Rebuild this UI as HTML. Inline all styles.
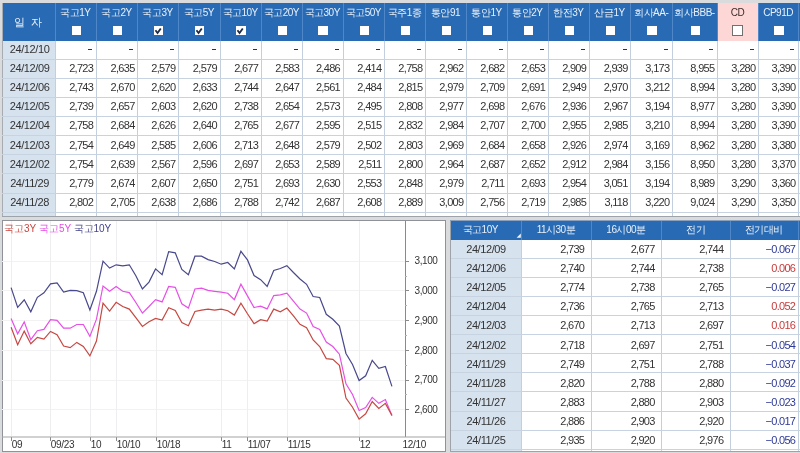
<!DOCTYPE html>
<html><head><meta charset="utf-8"><style>
html,body{margin:0;padding:0;}
body{width:800px;height:453px;overflow:hidden;position:relative;background:#dadbdd;font-family:"Liberation Sans",sans-serif;color:#222;}
div{position:absolute;box-sizing:border-box;}
.t{white-space:nowrap;line-height:12px;}
.hd{color:#e9f0fa;font-size:10px;text-align:center;letter-spacing:-0.5px;}
.dt{font-size:11px;text-align:center;letter-spacing:-0.4px;color:#333;}
.nm{font-size:11px;text-align:right;letter-spacing:-0.7px;color:#333;}
.dash{width:4px;height:1px;background:#333;}
.cb{width:9.4px;height:9.4px;background:#fff;}
.vl{width:1px;}
.hl{height:1px;}
</style></head><body>
<div style="left:0;top:0;width:800px;height:453px;will-change:transform">
<div style="left:2px;top:2.6px;width:798px;height:213.70000000000002px;background:#fff"></div><div class="vl" style="left:2px;top:2.6px;height:213.9px;background:#a7abb2"></div><div style="left:3px;top:2.6px;width:797px;height:38.0px;background:#286bb4"></div><div style="left:717.5px;top:2.6px;width:40.5px;height:38.0px;background:#fdd7d6"></div><div style="left:3px;top:40.6px;width:52.1px;height:175.70000000000002px;background:#d7e2ef"></div><div class="vl" style="left:55.1px;top:2.6px;height:38.0px;background:#4f87c8"></div><div class="vl" style="left:95.8px;top:2.6px;height:38.0px;background:#4f87c8"></div><div class="vl" style="left:137.2px;top:2.6px;height:38.0px;background:#4f87c8"></div><div class="vl" style="left:178.0px;top:2.6px;height:38.0px;background:#4f87c8"></div><div class="vl" style="left:219.5px;top:2.6px;height:38.0px;background:#4f87c8"></div><div class="vl" style="left:260.8px;top:2.6px;height:38.0px;background:#4f87c8"></div><div class="vl" style="left:301.8px;top:2.6px;height:38.0px;background:#4f87c8"></div><div class="vl" style="left:342.6px;top:2.6px;height:38.0px;background:#4f87c8"></div><div class="vl" style="left:384.0px;top:2.6px;height:38.0px;background:#4f87c8"></div><div class="vl" style="left:425.0px;top:2.6px;height:38.0px;background:#4f87c8"></div><div class="vl" style="left:466.0px;top:2.6px;height:38.0px;background:#4f87c8"></div><div class="vl" style="left:507.0px;top:2.6px;height:38.0px;background:#4f87c8"></div><div class="vl" style="left:547.8px;top:2.6px;height:38.0px;background:#4f87c8"></div><div class="vl" style="left:588.8px;top:2.6px;height:38.0px;background:#4f87c8"></div><div class="vl" style="left:630.3px;top:2.6px;height:38.0px;background:#4f87c8"></div><div class="vl" style="left:672.0px;top:2.6px;height:38.0px;background:#4f87c8"></div><div class="vl" style="left:717.0px;top:2.6px;height:38.0px;background:#4f87c8"></div><div class="vl" style="left:758.0px;top:2.6px;height:38.0px;background:#4f87c8"></div><div class="vl" style="left:798.1px;top:2.6px;height:38.0px;background:#4f87c8"></div><div class="vl" style="left:55.1px;top:40.6px;height:175.70000000000002px;background:#c3cfdc"></div><div class="vl" style="left:95.8px;top:40.6px;height:175.70000000000002px;background:#c3cfdc"></div><div class="vl" style="left:137.2px;top:40.6px;height:175.70000000000002px;background:#c3cfdc"></div><div class="vl" style="left:178.0px;top:40.6px;height:175.70000000000002px;background:#c3cfdc"></div><div class="vl" style="left:219.5px;top:40.6px;height:175.70000000000002px;background:#c3cfdc"></div><div class="vl" style="left:260.8px;top:40.6px;height:175.70000000000002px;background:#c3cfdc"></div><div class="vl" style="left:301.8px;top:40.6px;height:175.70000000000002px;background:#c3cfdc"></div><div class="vl" style="left:342.6px;top:40.6px;height:175.70000000000002px;background:#c3cfdc"></div><div class="vl" style="left:384.0px;top:40.6px;height:175.70000000000002px;background:#c3cfdc"></div><div class="vl" style="left:425.0px;top:40.6px;height:175.70000000000002px;background:#c3cfdc"></div><div class="vl" style="left:466.0px;top:40.6px;height:175.70000000000002px;background:#c3cfdc"></div><div class="vl" style="left:507.0px;top:40.6px;height:175.70000000000002px;background:#c3cfdc"></div><div class="vl" style="left:547.8px;top:40.6px;height:175.70000000000002px;background:#c3cfdc"></div><div class="vl" style="left:588.8px;top:40.6px;height:175.70000000000002px;background:#c3cfdc"></div><div class="vl" style="left:630.3px;top:40.6px;height:175.70000000000002px;background:#c3cfdc"></div><div class="vl" style="left:672.0px;top:40.6px;height:175.70000000000002px;background:#c3cfdc"></div><div class="vl" style="left:717.0px;top:40.6px;height:175.70000000000002px;background:#c3cfdc"></div><div class="vl" style="left:758.0px;top:40.6px;height:175.70000000000002px;background:#c3cfdc"></div><div class="vl" style="left:798.1px;top:40.6px;height:175.70000000000002px;background:#c3cfdc"></div><div class="hl" style="left:2px;top:59.00px;width:798px;background:#c7d3e0"></div><div class="hl" style="left:2px;top:78.00px;width:798px;background:#c7d3e0"></div><div class="hl" style="left:2px;top:97.00px;width:798px;background:#c7d3e0"></div><div class="hl" style="left:2px;top:116.00px;width:798px;background:#c7d3e0"></div><div class="hl" style="left:2px;top:135.00px;width:798px;background:#c7d3e0"></div><div class="hl" style="left:2px;top:154.00px;width:798px;background:#c7d3e0"></div><div class="hl" style="left:2px;top:173.00px;width:798px;background:#c7d3e0"></div><div class="hl" style="left:2px;top:193.00px;width:798px;background:#c7d3e0"></div><div class="hl" style="left:2px;top:212.00px;width:798px;background:#c7d3e0"></div><div class="hl" style="left:2px;top:215.8px;width:798px;background:#9ea3aa"></div><div class="t hd" style="left:1.6px;top:15.5px;width:53.5px;font-size:11px;letter-spacing:0px">일&nbsp;&nbsp;자</div><div class="t hd" style="left:55.1px;top:6.5px;width:40.699999999999996px;color:#e9f0fa">국고1Y</div><div class="cb" style="left:71.65px;top:26px"></div><div class="t hd" style="left:95.8px;top:6.5px;width:41.39999999999999px;color:#e9f0fa">국고2Y</div><div class="cb" style="left:112.70px;top:26px"></div><div class="t hd" style="left:137.2px;top:6.5px;width:40.80000000000001px;color:#e9f0fa">국고3Y</div><div class="cb" style="left:153.80px;top:26px"></div><svg style="position:absolute;left:153.80px;top:26px" width="9.4" height="9.4" viewBox="0 0 9 9"><path d="M1.4 4.1 L3.4 6.7 L6.5 2.4" fill="none" stroke="#1e2c48" stroke-width="1.8"/></svg><div class="t hd" style="left:178.0px;top:6.5px;width:41.5px;color:#e9f0fa">국고5Y</div><div class="cb" style="left:194.95px;top:26px"></div><svg style="position:absolute;left:194.95px;top:26px" width="9.4" height="9.4" viewBox="0 0 9 9"><path d="M1.4 4.1 L3.4 6.7 L6.5 2.4" fill="none" stroke="#1e2c48" stroke-width="1.8"/></svg><div class="t hd" style="left:219.5px;top:6.5px;width:41.30000000000001px;color:#e9f0fa">국고10Y</div><div class="cb" style="left:236.35px;top:26px"></div><svg style="position:absolute;left:236.35px;top:26px" width="9.4" height="9.4" viewBox="0 0 9 9"><path d="M1.4 4.1 L3.4 6.7 L6.5 2.4" fill="none" stroke="#1e2c48" stroke-width="1.8"/></svg><div class="t hd" style="left:260.8px;top:6.5px;width:41.0px;color:#e9f0fa">국고20Y</div><div class="cb" style="left:277.50px;top:26px"></div><div class="t hd" style="left:301.8px;top:6.5px;width:40.80000000000001px;color:#e9f0fa">국고30Y</div><div class="cb" style="left:318.40px;top:26px"></div><div class="t hd" style="left:342.6px;top:6.5px;width:41.39999999999998px;color:#e9f0fa">국고50Y</div><div class="cb" style="left:359.50px;top:26px"></div><div class="t hd" style="left:384.0px;top:6.5px;width:41.0px;color:#e9f0fa">국주1종</div><div class="cb" style="left:400.70px;top:26px"></div><div class="t hd" style="left:425.0px;top:6.5px;width:41.0px;color:#e9f0fa">통안91</div><div class="cb" style="left:441.70px;top:26px"></div><div class="t hd" style="left:466.0px;top:6.5px;width:41.0px;color:#e9f0fa">통안1Y</div><div class="cb" style="left:482.70px;top:26px"></div><div class="t hd" style="left:507.0px;top:6.5px;width:40.799999999999955px;color:#e9f0fa">통안2Y</div><div class="cb" style="left:523.60px;top:26px"></div><div class="t hd" style="left:547.8px;top:6.5px;width:41.0px;color:#e9f0fa">한전3Y</div><div class="cb" style="left:564.50px;top:26px"></div><div class="t hd" style="left:588.8px;top:6.5px;width:41.5px;color:#e9f0fa">산금1Y</div><div class="cb" style="left:605.75px;top:26px"></div><div class="t hd" style="left:630.3px;top:6.5px;width:41.700000000000045px;color:#e9f0fa">회사AA-</div><div class="cb" style="left:647.35px;top:26px"></div><div class="t hd" style="left:672.0px;top:6.5px;width:45.0px;color:#e9f0fa">회사BBB-</div><div class="cb" style="left:690.70px;top:26px"></div><div class="t hd" style="left:717.0px;top:6.5px;width:41.0px;color:#3a2a2a">CD</div><div class="cb" style="left:732.00px;top:25px;width:11px;height:11px;border:1.5px solid #707070"></div><div class="t hd" style="left:758.0px;top:6.5px;width:40.10000000000002px;color:#e9f0fa">CP91D</div><div class="cb" style="left:774.25px;top:26px"></div><div class="t dt" style="left:3px;top:42.80px;width:53.1px">24/12/10</div><div class="dash" style="left:88.00px;top:49px"></div><div class="dash" style="left:129.40px;top:49px"></div><div class="dash" style="left:170.20px;top:49px"></div><div class="dash" style="left:211.70px;top:49px"></div><div class="dash" style="left:253.00px;top:49px"></div><div class="dash" style="left:294.00px;top:49px"></div><div class="dash" style="left:334.80px;top:49px"></div><div class="dash" style="left:376.20px;top:49px"></div><div class="dash" style="left:417.20px;top:49px"></div><div class="dash" style="left:458.20px;top:49px"></div><div class="dash" style="left:499.20px;top:49px"></div><div class="dash" style="left:540.00px;top:49px"></div><div class="dash" style="left:581.00px;top:49px"></div><div class="dash" style="left:622.50px;top:49px"></div><div class="dash" style="left:664.20px;top:49px"></div><div class="dash" style="left:709.20px;top:49px"></div><div class="dash" style="left:750.20px;top:49px"></div><div class="dash" style="left:790.30px;top:49px"></div><div class="t dt" style="left:3px;top:61.94px;width:53.1px">24/12/09</div><div class="t nm" style="left:55.1px;top:61.94px;width:38.10px">2,723</div><div class="t nm" style="left:95.8px;top:61.94px;width:38.80px">2,635</div><div class="t nm" style="left:137.2px;top:61.94px;width:38.20px">2,579</div><div class="t nm" style="left:178.0px;top:61.94px;width:38.90px">2,579</div><div class="t nm" style="left:219.5px;top:61.94px;width:38.70px">2,677</div><div class="t nm" style="left:260.8px;top:61.94px;width:38.40px">2,583</div><div class="t nm" style="left:301.8px;top:61.94px;width:38.20px">2,486</div><div class="t nm" style="left:342.6px;top:61.94px;width:38.80px">2,414</div><div class="t nm" style="left:384.0px;top:61.94px;width:38.40px">2,758</div><div class="t nm" style="left:425.0px;top:61.94px;width:38.40px">2,962</div><div class="t nm" style="left:466.0px;top:61.94px;width:38.40px">2,682</div><div class="t nm" style="left:507.0px;top:61.94px;width:38.20px">2,653</div><div class="t nm" style="left:547.8px;top:61.94px;width:38.40px">2,909</div><div class="t nm" style="left:588.8px;top:61.94px;width:38.90px">2,939</div><div class="t nm" style="left:630.3px;top:61.94px;width:39.10px">3,173</div><div class="t nm" style="left:672.0px;top:61.94px;width:42.40px">8,955</div><div class="t nm" style="left:717.0px;top:61.94px;width:38.40px">3,280</div><div class="t nm" style="left:758.0px;top:61.94px;width:37.50px">3,390</div><div class="t dt" style="left:3px;top:81.08px;width:53.1px">24/12/06</div><div class="t nm" style="left:55.1px;top:81.08px;width:38.10px">2,743</div><div class="t nm" style="left:95.8px;top:81.08px;width:38.80px">2,670</div><div class="t nm" style="left:137.2px;top:81.08px;width:38.20px">2,620</div><div class="t nm" style="left:178.0px;top:81.08px;width:38.90px">2,633</div><div class="t nm" style="left:219.5px;top:81.08px;width:38.70px">2,744</div><div class="t nm" style="left:260.8px;top:81.08px;width:38.40px">2,647</div><div class="t nm" style="left:301.8px;top:81.08px;width:38.20px">2,561</div><div class="t nm" style="left:342.6px;top:81.08px;width:38.80px">2,484</div><div class="t nm" style="left:384.0px;top:81.08px;width:38.40px">2,815</div><div class="t nm" style="left:425.0px;top:81.08px;width:38.40px">2,979</div><div class="t nm" style="left:466.0px;top:81.08px;width:38.40px">2,709</div><div class="t nm" style="left:507.0px;top:81.08px;width:38.20px">2,691</div><div class="t nm" style="left:547.8px;top:81.08px;width:38.40px">2,949</div><div class="t nm" style="left:588.8px;top:81.08px;width:38.90px">2,970</div><div class="t nm" style="left:630.3px;top:81.08px;width:39.10px">3,212</div><div class="t nm" style="left:672.0px;top:81.08px;width:42.40px">8,994</div><div class="t nm" style="left:717.0px;top:81.08px;width:38.40px">3,280</div><div class="t nm" style="left:758.0px;top:81.08px;width:37.50px">3,390</div><div class="t dt" style="left:3px;top:100.22px;width:53.1px">24/12/05</div><div class="t nm" style="left:55.1px;top:100.22px;width:38.10px">2,739</div><div class="t nm" style="left:95.8px;top:100.22px;width:38.80px">2,657</div><div class="t nm" style="left:137.2px;top:100.22px;width:38.20px">2,603</div><div class="t nm" style="left:178.0px;top:100.22px;width:38.90px">2,620</div><div class="t nm" style="left:219.5px;top:100.22px;width:38.70px">2,738</div><div class="t nm" style="left:260.8px;top:100.22px;width:38.40px">2,654</div><div class="t nm" style="left:301.8px;top:100.22px;width:38.20px">2,573</div><div class="t nm" style="left:342.6px;top:100.22px;width:38.80px">2,495</div><div class="t nm" style="left:384.0px;top:100.22px;width:38.40px">2,808</div><div class="t nm" style="left:425.0px;top:100.22px;width:38.40px">2,977</div><div class="t nm" style="left:466.0px;top:100.22px;width:38.40px">2,698</div><div class="t nm" style="left:507.0px;top:100.22px;width:38.20px">2,676</div><div class="t nm" style="left:547.8px;top:100.22px;width:38.40px">2,936</div><div class="t nm" style="left:588.8px;top:100.22px;width:38.90px">2,967</div><div class="t nm" style="left:630.3px;top:100.22px;width:39.10px">3,194</div><div class="t nm" style="left:672.0px;top:100.22px;width:42.40px">8,977</div><div class="t nm" style="left:717.0px;top:100.22px;width:38.40px">3,280</div><div class="t nm" style="left:758.0px;top:100.22px;width:37.50px">3,390</div><div class="t dt" style="left:3px;top:119.36px;width:53.1px">24/12/04</div><div class="t nm" style="left:55.1px;top:119.36px;width:38.10px">2,758</div><div class="t nm" style="left:95.8px;top:119.36px;width:38.80px">2,684</div><div class="t nm" style="left:137.2px;top:119.36px;width:38.20px">2,626</div><div class="t nm" style="left:178.0px;top:119.36px;width:38.90px">2,640</div><div class="t nm" style="left:219.5px;top:119.36px;width:38.70px">2,765</div><div class="t nm" style="left:260.8px;top:119.36px;width:38.40px">2,677</div><div class="t nm" style="left:301.8px;top:119.36px;width:38.20px">2,595</div><div class="t nm" style="left:342.6px;top:119.36px;width:38.80px">2,515</div><div class="t nm" style="left:384.0px;top:119.36px;width:38.40px">2,832</div><div class="t nm" style="left:425.0px;top:119.36px;width:38.40px">2,984</div><div class="t nm" style="left:466.0px;top:119.36px;width:38.40px">2,707</div><div class="t nm" style="left:507.0px;top:119.36px;width:38.20px">2,700</div><div class="t nm" style="left:547.8px;top:119.36px;width:38.40px">2,955</div><div class="t nm" style="left:588.8px;top:119.36px;width:38.90px">2,985</div><div class="t nm" style="left:630.3px;top:119.36px;width:39.10px">3,210</div><div class="t nm" style="left:672.0px;top:119.36px;width:42.40px">8,994</div><div class="t nm" style="left:717.0px;top:119.36px;width:38.40px">3,280</div><div class="t nm" style="left:758.0px;top:119.36px;width:37.50px">3,390</div><div class="t dt" style="left:3px;top:138.50px;width:53.1px">24/12/03</div><div class="t nm" style="left:55.1px;top:138.50px;width:38.10px">2,754</div><div class="t nm" style="left:95.8px;top:138.50px;width:38.80px">2,649</div><div class="t nm" style="left:137.2px;top:138.50px;width:38.20px">2,585</div><div class="t nm" style="left:178.0px;top:138.50px;width:38.90px">2,606</div><div class="t nm" style="left:219.5px;top:138.50px;width:38.70px">2,713</div><div class="t nm" style="left:260.8px;top:138.50px;width:38.40px">2,648</div><div class="t nm" style="left:301.8px;top:138.50px;width:38.20px">2,579</div><div class="t nm" style="left:342.6px;top:138.50px;width:38.80px">2,502</div><div class="t nm" style="left:384.0px;top:138.50px;width:38.40px">2,803</div><div class="t nm" style="left:425.0px;top:138.50px;width:38.40px">2,969</div><div class="t nm" style="left:466.0px;top:138.50px;width:38.40px">2,684</div><div class="t nm" style="left:507.0px;top:138.50px;width:38.20px">2,658</div><div class="t nm" style="left:547.8px;top:138.50px;width:38.40px">2,926</div><div class="t nm" style="left:588.8px;top:138.50px;width:38.90px">2,974</div><div class="t nm" style="left:630.3px;top:138.50px;width:39.10px">3,169</div><div class="t nm" style="left:672.0px;top:138.50px;width:42.40px">8,962</div><div class="t nm" style="left:717.0px;top:138.50px;width:38.40px">3,280</div><div class="t nm" style="left:758.0px;top:138.50px;width:37.50px">3,380</div><div class="t dt" style="left:3px;top:157.64px;width:53.1px">24/12/02</div><div class="t nm" style="left:55.1px;top:157.64px;width:38.10px">2,754</div><div class="t nm" style="left:95.8px;top:157.64px;width:38.80px">2,639</div><div class="t nm" style="left:137.2px;top:157.64px;width:38.20px">2,567</div><div class="t nm" style="left:178.0px;top:157.64px;width:38.90px">2,596</div><div class="t nm" style="left:219.5px;top:157.64px;width:38.70px">2,697</div><div class="t nm" style="left:260.8px;top:157.64px;width:38.40px">2,653</div><div class="t nm" style="left:301.8px;top:157.64px;width:38.20px">2,589</div><div class="t nm" style="left:342.6px;top:157.64px;width:38.80px">2,511</div><div class="t nm" style="left:384.0px;top:157.64px;width:38.40px">2,800</div><div class="t nm" style="left:425.0px;top:157.64px;width:38.40px">2,964</div><div class="t nm" style="left:466.0px;top:157.64px;width:38.40px">2,687</div><div class="t nm" style="left:507.0px;top:157.64px;width:38.20px">2,652</div><div class="t nm" style="left:547.8px;top:157.64px;width:38.40px">2,912</div><div class="t nm" style="left:588.8px;top:157.64px;width:38.90px">2,984</div><div class="t nm" style="left:630.3px;top:157.64px;width:39.10px">3,156</div><div class="t nm" style="left:672.0px;top:157.64px;width:42.40px">8,950</div><div class="t nm" style="left:717.0px;top:157.64px;width:38.40px">3,280</div><div class="t nm" style="left:758.0px;top:157.64px;width:37.50px">3,370</div><div class="t dt" style="left:3px;top:176.78px;width:53.1px">24/11/29</div><div class="t nm" style="left:55.1px;top:176.78px;width:38.10px">2,779</div><div class="t nm" style="left:95.8px;top:176.78px;width:38.80px">2,674</div><div class="t nm" style="left:137.2px;top:176.78px;width:38.20px">2,607</div><div class="t nm" style="left:178.0px;top:176.78px;width:38.90px">2,650</div><div class="t nm" style="left:219.5px;top:176.78px;width:38.70px">2,751</div><div class="t nm" style="left:260.8px;top:176.78px;width:38.40px">2,693</div><div class="t nm" style="left:301.8px;top:176.78px;width:38.20px">2,630</div><div class="t nm" style="left:342.6px;top:176.78px;width:38.80px">2,553</div><div class="t nm" style="left:384.0px;top:176.78px;width:38.40px">2,848</div><div class="t nm" style="left:425.0px;top:176.78px;width:38.40px">2,979</div><div class="t nm" style="left:466.0px;top:176.78px;width:38.40px">2,711</div><div class="t nm" style="left:507.0px;top:176.78px;width:38.20px">2,693</div><div class="t nm" style="left:547.8px;top:176.78px;width:38.40px">2,954</div><div class="t nm" style="left:588.8px;top:176.78px;width:38.90px">3,051</div><div class="t nm" style="left:630.3px;top:176.78px;width:39.10px">3,194</div><div class="t nm" style="left:672.0px;top:176.78px;width:42.40px">8,989</div><div class="t nm" style="left:717.0px;top:176.78px;width:38.40px">3,290</div><div class="t nm" style="left:758.0px;top:176.78px;width:37.50px">3,360</div><div class="t dt" style="left:3px;top:195.92px;width:53.1px">24/11/28</div><div class="t nm" style="left:55.1px;top:195.92px;width:38.10px">2,802</div><div class="t nm" style="left:95.8px;top:195.92px;width:38.80px">2,705</div><div class="t nm" style="left:137.2px;top:195.92px;width:38.20px">2,638</div><div class="t nm" style="left:178.0px;top:195.92px;width:38.90px">2,686</div><div class="t nm" style="left:219.5px;top:195.92px;width:38.70px">2,788</div><div class="t nm" style="left:260.8px;top:195.92px;width:38.40px">2,742</div><div class="t nm" style="left:301.8px;top:195.92px;width:38.20px">2,687</div><div class="t nm" style="left:342.6px;top:195.92px;width:38.80px">2,608</div><div class="t nm" style="left:384.0px;top:195.92px;width:38.40px">2,889</div><div class="t nm" style="left:425.0px;top:195.92px;width:38.40px">3,009</div><div class="t nm" style="left:466.0px;top:195.92px;width:38.40px">2,756</div><div class="t nm" style="left:507.0px;top:195.92px;width:38.20px">2,719</div><div class="t nm" style="left:547.8px;top:195.92px;width:38.40px">2,985</div><div class="t nm" style="left:588.8px;top:195.92px;width:38.90px">3,118</div><div class="t nm" style="left:630.3px;top:195.92px;width:39.10px">3,220</div><div class="t nm" style="left:672.0px;top:195.92px;width:42.40px">9,024</div><div class="t nm" style="left:717.0px;top:195.92px;width:38.40px">3,290</div><div class="t nm" style="left:758.0px;top:195.92px;width:37.50px">3,350</div><div style="left:2px;top:220px;width:444px;height:232px;background:#fff;border:1px solid #8f9298"></div><svg style="position:absolute;left:0;top:0" width="800" height="453" viewBox="0 0 800 453"><line x1="2" y1="261.5" x2="405" y2="261.5" stroke="#f2f2f2" stroke-width="1"/><line x1="2" y1="290.5" x2="405" y2="290.5" stroke="#f2f2f2" stroke-width="1"/><line x1="2" y1="320.5" x2="405" y2="320.5" stroke="#f2f2f2" stroke-width="1"/><line x1="2" y1="350.5" x2="405" y2="350.5" stroke="#f2f2f2" stroke-width="1"/><line x1="2" y1="380.5" x2="405" y2="380.5" stroke="#f2f2f2" stroke-width="1"/><line x1="2" y1="409.5" x2="405" y2="409.5" stroke="#f2f2f2" stroke-width="1"/><line x1="11.5" y1="221" x2="11.5" y2="436" stroke="#eeeef1" stroke-width="1"/><line x1="11.5" y1="437" x2="11.5" y2="441" stroke="#8a8a8a" stroke-width="1"/><line x1="50.5" y1="221" x2="50.5" y2="436" stroke="#eeeef1" stroke-width="1"/><line x1="50.5" y1="437" x2="50.5" y2="441" stroke="#8a8a8a" stroke-width="1"/><line x1="90.5" y1="221" x2="90.5" y2="436" stroke="#eeeef1" stroke-width="1"/><line x1="90.5" y1="437" x2="90.5" y2="441" stroke="#8a8a8a" stroke-width="1"/><line x1="116.5" y1="221" x2="116.5" y2="436" stroke="#eeeef1" stroke-width="1"/><line x1="116.5" y1="437" x2="116.5" y2="441" stroke="#8a8a8a" stroke-width="1"/><line x1="156.5" y1="221" x2="156.5" y2="436" stroke="#eeeef1" stroke-width="1"/><line x1="156.5" y1="437" x2="156.5" y2="441" stroke="#8a8a8a" stroke-width="1"/><line x1="221.5" y1="221" x2="221.5" y2="436" stroke="#eeeef1" stroke-width="1"/><line x1="221.5" y1="437" x2="221.5" y2="441" stroke="#8a8a8a" stroke-width="1"/><line x1="247.5" y1="221" x2="247.5" y2="436" stroke="#eeeef1" stroke-width="1"/><line x1="247.5" y1="437" x2="247.5" y2="441" stroke="#8a8a8a" stroke-width="1"/><line x1="287.5" y1="221" x2="287.5" y2="436" stroke="#eeeef1" stroke-width="1"/><line x1="287.5" y1="437" x2="287.5" y2="441" stroke="#8a8a8a" stroke-width="1"/><line x1="359.5" y1="221" x2="359.5" y2="436" stroke="#eeeef1" stroke-width="1"/><line x1="359.5" y1="437" x2="359.5" y2="441" stroke="#8a8a8a" stroke-width="1"/><line x1="405.5" y1="221" x2="405.5" y2="437" stroke="#8a8a8a" stroke-width="1"/><line x1="2" y1="437" x2="445" y2="437" stroke="#a3a3a3" stroke-width="1.2"/><line x1="405" y1="261.5" x2="409" y2="261.5" stroke="#8a8a8a" stroke-width="1"/><line x1="405" y1="276.5" x2="407" y2="276.5" stroke="#b0b0b0" stroke-width="1"/><line x1="405" y1="290.5" x2="409" y2="290.5" stroke="#8a8a8a" stroke-width="1"/><line x1="405" y1="305.5" x2="407" y2="305.5" stroke="#b0b0b0" stroke-width="1"/><line x1="405" y1="320.5" x2="409" y2="320.5" stroke="#8a8a8a" stroke-width="1"/><line x1="405" y1="335.5" x2="407" y2="335.5" stroke="#b0b0b0" stroke-width="1"/><line x1="405" y1="350.5" x2="409" y2="350.5" stroke="#8a8a8a" stroke-width="1"/><line x1="405" y1="365.5" x2="407" y2="365.5" stroke="#b0b0b0" stroke-width="1"/><line x1="405" y1="380.5" x2="409" y2="380.5" stroke="#8a8a8a" stroke-width="1"/><line x1="405" y1="394.5" x2="407" y2="394.5" stroke="#b0b0b0" stroke-width="1"/><line x1="405" y1="409.5" x2="409" y2="409.5" stroke="#8a8a8a" stroke-width="1"/><polyline points="11.10,287.60 17.67,307.40 24.23,299.80 30.80,311.80 37.36,297.30 43.93,292.80 50.50,283.90 57.06,282.90 63.63,292.00 70.19,290.30 76.76,290.60 83.33,292.80 89.89,310.00 96.46,291.30 103.02,261.20 109.59,268.10 116.16,264.80 122.72,265.80 129.29,264.80 135.85,275.80 142.42,289.00 148.99,282.10 155.55,268.90 162.12,274.70 168.68,251.70 175.25,252.80 181.82,269.50 188.38,274.70 194.95,256.20 201.51,256.20 208.08,259.60 214.65,261.50 221.21,264.20 227.78,262.50 234.34,268.90 240.91,251.30 247.48,259.90 254.04,275.50 260.61,279.70 267.17,286.40 273.74,270.50 280.31,268.50 286.87,265.60 293.44,272.50 300.00,279.00 306.57,284.30 313.14,296.50 319.70,297.50 326.27,314.26 332.83,319.31 339.40,326.14 345.97,353.46 352.53,364.45 359.10,380.49 365.66,375.74 372.23,360.30 378.80,368.31 385.36,366.53 391.93,386.43" fill="none" stroke="#48488c" stroke-width="1.2"/><polyline points="11.10,318.50 17.67,333.80 24.23,321.90 30.80,339.70 37.36,330.70 43.93,329.40 50.50,319.60 57.06,320.30 63.63,328.10 70.19,328.20 76.76,324.50 83.33,324.50 89.89,336.40 96.46,319.20 103.02,286.00 109.59,291.30 116.16,286.40 122.72,291.30 129.29,292.60 135.85,302.50 142.42,313.10 148.99,306.50 155.55,299.60 162.12,301.90 168.68,286.40 175.25,287.30 181.82,303.80 188.38,308.10 194.95,289.00 201.51,288.20 208.08,290.30 214.65,291.30 221.21,292.20 227.78,293.20 234.34,299.60 240.91,284.20 247.48,295.90 254.04,307.50 260.61,306.20 267.17,308.90 273.74,295.60 280.31,294.80 286.87,293.20 293.44,301.20 300.00,309.10 306.57,313.10 313.14,326.50 319.70,329.50 326.27,342.00 332.83,346.50 339.40,354.20 345.97,383.76 352.53,394.45 359.10,410.49 365.66,407.52 372.23,397.42 378.80,403.36 385.36,399.50 391.93,415.54" fill="none" stroke="#e650e6" stroke-width="1.2"/><polyline points="11.10,327.20 17.67,344.80 24.23,331.10 30.80,343.70 37.36,337.40 43.93,339.10 50.50,331.40 57.06,334.70 63.63,346.10 70.19,347.70 76.76,342.40 83.33,346.40 89.89,355.90 96.46,341.00 103.02,303.20 109.59,311.10 116.16,302.30 122.72,306.50 129.29,309.10 135.85,317.70 142.42,326.40 148.99,321.70 155.55,318.40 162.12,320.00 168.68,307.80 175.25,310.50 181.82,322.60 188.38,325.70 194.95,311.50 201.51,310.20 208.08,309.10 214.65,310.20 221.21,309.10 227.78,310.70 234.34,315.10 240.91,303.20 247.48,313.80 254.04,323.70 260.61,319.70 267.17,321.10 273.74,309.10 280.31,311.80 286.87,308.10 293.44,315.80 300.00,324.40 306.57,327.70 313.14,340.00 319.70,346.50 326.27,358.60 332.83,359.30 339.40,365.30 345.97,398.01 352.53,407.22 359.10,419.10 365.66,413.75 372.23,401.58 378.80,408.41 385.36,403.36 391.93,415.54" fill="none" stroke="#c64842" stroke-width="1.2"/></svg><div class="t" style="left:414.5px;top:255.40px;font-size:10px;letter-spacing:-0.4px;color:#333">3,100</div><div class="t" style="left:414.5px;top:285.10px;font-size:10px;letter-spacing:-0.4px;color:#333">3,000</div><div class="t" style="left:414.5px;top:314.80px;font-size:10px;letter-spacing:-0.4px;color:#333">2,900</div><div class="t" style="left:414.5px;top:344.50px;font-size:10px;letter-spacing:-0.4px;color:#333">2,800</div><div class="t" style="left:414.5px;top:374.20px;font-size:10px;letter-spacing:-0.4px;color:#333">2,700</div><div class="t" style="left:414.5px;top:403.90px;font-size:10px;letter-spacing:-0.4px;color:#333">2,600</div><div class="t" style="left:11.8px;top:438.6px;font-size:10px;letter-spacing:-0.3px;color:#333">09</div><div class="t" style="left:50.8px;top:438.6px;font-size:10px;letter-spacing:-0.3px;color:#333">09/23</div><div class="t" style="left:90.8px;top:438.6px;font-size:10px;letter-spacing:-0.3px;color:#333">10</div><div class="t" style="left:116.8px;top:438.6px;font-size:10px;letter-spacing:-0.3px;color:#333">10/10</div><div class="t" style="left:156.8px;top:438.6px;font-size:10px;letter-spacing:-0.3px;color:#333">10/18</div><div class="t" style="left:221.8px;top:438.6px;font-size:10px;letter-spacing:-0.3px;color:#333">11</div><div class="t" style="left:247.8px;top:438.6px;font-size:10px;letter-spacing:-0.3px;color:#333">11/07</div><div class="t" style="left:287.8px;top:438.6px;font-size:10px;letter-spacing:-0.3px;color:#333">11/15</div><div class="t" style="left:359.8px;top:438.6px;font-size:10px;letter-spacing:-0.3px;color:#333">12</div><div class="t" style="left:402.5px;top:438.6px;font-size:10px;letter-spacing:-0.3px;color:#333">12/10</div><div class="t" style="left:4px;top:223px;font-size:10px;color:#c9453f">국고3Y</div><div class="t" style="left:39px;top:223px;font-size:10px;color:#e649e6">국고5Y</div><div class="t" style="left:73.5px;top:223px;font-size:10px;color:#43438a">국고10Y</div><div style="left:450px;top:220.6px;width:350px;height:231.4px;background:#fff"></div><div style="left:451px;top:220.6px;width:349px;height:19.099999999999994px;background:#286bb4"></div><div style="left:451px;top:239.7px;width:70.0px;height:211.3px;background:#d7e2ef"></div><div class="vl" style="left:450px;top:220.0px;height:231.4px;background:#9ea3aa"></div><div class="hl" style="left:450px;top:220.0px;width:350px;background:#8aa0bb"></div><div class="hl" style="left:450px;top:451px;width:350px;background:#9ea3aa"></div><div class="vl" style="left:521.0px;top:220.6px;height:19.099999999999994px;background:#4f87c8"></div><div class="vl" style="left:521.0px;top:239.7px;height:211.3px;background:#c3cfdc"></div><div class="vl" style="left:590.8px;top:220.6px;height:19.099999999999994px;background:#4f87c8"></div><div class="vl" style="left:590.8px;top:239.7px;height:211.3px;background:#c3cfdc"></div><div class="vl" style="left:661.2px;top:220.6px;height:19.099999999999994px;background:#4f87c8"></div><div class="vl" style="left:661.2px;top:239.7px;height:211.3px;background:#c3cfdc"></div><div class="vl" style="left:729.9px;top:220.6px;height:19.099999999999994px;background:#4f87c8"></div><div class="vl" style="left:729.9px;top:239.7px;height:211.3px;background:#c3cfdc"></div><div class="vl" style="left:798.1px;top:220.6px;height:19.099999999999994px;background:#4f87c8"></div><div class="vl" style="left:798.1px;top:239.7px;height:211.3px;background:#c3cfdc"></div><div class="hl" style="left:451px;top:258.00px;width:349px;background:#c7d3e0"></div><div class="hl" style="left:451px;top:277.00px;width:349px;background:#c7d3e0"></div><div class="hl" style="left:451px;top:296.00px;width:349px;background:#c7d3e0"></div><div class="hl" style="left:451px;top:315.00px;width:349px;background:#c7d3e0"></div><div class="hl" style="left:451px;top:334.00px;width:349px;background:#c7d3e0"></div><div class="hl" style="left:451px;top:353.00px;width:349px;background:#c7d3e0"></div><div class="hl" style="left:451px;top:372.00px;width:349px;background:#c7d3e0"></div><div class="hl" style="left:451px;top:391.00px;width:349px;background:#c7d3e0"></div><div class="hl" style="left:451px;top:411.00px;width:349px;background:#c7d3e0"></div><div class="hl" style="left:451px;top:430.00px;width:349px;background:#c7d3e0"></div><div class="hl" style="left:451px;top:449.00px;width:349px;background:#c7d3e0"></div><div class="t hd" style="left:445.0px;top:224.0px;width:70.5px">국고10Y</div><div class="t hd" style="left:521.0px;top:224.0px;width:69.79999999999995px">11시30분</div><div class="t hd" style="left:590.8px;top:224.0px;width:70.40000000000009px">16시00분</div><div class="t hd" style="left:661.2px;top:224.0px;width:68.69999999999993px">전기</div><div class="t hd" style="left:729.9px;top:224.0px;width:68.20000000000005px">전기대비</div><svg style="position:absolute;left:516px;top:233px" width="6" height="6"><path d="M4.8 0.6 L4.8 4.8 L0.6 4.8 Z" fill="#eef3fa"/></svg><div class="t dt" style="left:451px;top:242.90px;width:70.0px">24/12/09</div><div class="t nm" style="left:521.0px;top:242.90px;width:63.30px;color:#333">2,739</div><div class="t nm" style="left:590.8px;top:242.90px;width:63.90px;color:#333">2,677</div><div class="t nm" style="left:661.2px;top:242.90px;width:62.20px;color:#333">2,744</div><div class="t nm" style="left:729.9px;top:242.90px;width:65.40px;color:#2e3a98">&minus;0.067</div><div class="t dt" style="left:451px;top:262.04px;width:70.0px">24/12/06</div><div class="t nm" style="left:521.0px;top:262.04px;width:63.30px;color:#333">2,740</div><div class="t nm" style="left:590.8px;top:262.04px;width:63.90px;color:#333">2,744</div><div class="t nm" style="left:661.2px;top:262.04px;width:62.20px;color:#333">2,738</div><div class="t nm" style="left:729.9px;top:262.04px;width:65.40px;color:#c83a3a">0.006</div><div class="t dt" style="left:451px;top:281.18px;width:70.0px">24/12/05</div><div class="t nm" style="left:521.0px;top:281.18px;width:63.30px;color:#333">2,774</div><div class="t nm" style="left:590.8px;top:281.18px;width:63.90px;color:#333">2,738</div><div class="t nm" style="left:661.2px;top:281.18px;width:62.20px;color:#333">2,765</div><div class="t nm" style="left:729.9px;top:281.18px;width:65.40px;color:#2e3a98">&minus;0.027</div><div class="t dt" style="left:451px;top:300.32px;width:70.0px">24/12/04</div><div class="t nm" style="left:521.0px;top:300.32px;width:63.30px;color:#333">2,736</div><div class="t nm" style="left:590.8px;top:300.32px;width:63.90px;color:#333">2,765</div><div class="t nm" style="left:661.2px;top:300.32px;width:62.20px;color:#333">2,713</div><div class="t nm" style="left:729.9px;top:300.32px;width:65.40px;color:#c83a3a">0.052</div><div class="t dt" style="left:451px;top:319.46px;width:70.0px">24/12/03</div><div class="t nm" style="left:521.0px;top:319.46px;width:63.30px;color:#333">2,670</div><div class="t nm" style="left:590.8px;top:319.46px;width:63.90px;color:#333">2,713</div><div class="t nm" style="left:661.2px;top:319.46px;width:62.20px;color:#333">2,697</div><div class="t nm" style="left:729.9px;top:319.46px;width:65.40px;color:#c83a3a">0.016</div><div class="t dt" style="left:451px;top:338.60px;width:70.0px">24/12/02</div><div class="t nm" style="left:521.0px;top:338.60px;width:63.30px;color:#333">2,718</div><div class="t nm" style="left:590.8px;top:338.60px;width:63.90px;color:#333">2,697</div><div class="t nm" style="left:661.2px;top:338.60px;width:62.20px;color:#333">2,751</div><div class="t nm" style="left:729.9px;top:338.60px;width:65.40px;color:#2e3a98">&minus;0.054</div><div class="t dt" style="left:451px;top:357.74px;width:70.0px">24/11/29</div><div class="t nm" style="left:521.0px;top:357.74px;width:63.30px;color:#333">2,749</div><div class="t nm" style="left:590.8px;top:357.74px;width:63.90px;color:#333">2,751</div><div class="t nm" style="left:661.2px;top:357.74px;width:62.20px;color:#333">2,788</div><div class="t nm" style="left:729.9px;top:357.74px;width:65.40px;color:#2e3a98">&minus;0.037</div><div class="t dt" style="left:451px;top:376.88px;width:70.0px">24/11/28</div><div class="t nm" style="left:521.0px;top:376.88px;width:63.30px;color:#333">2,820</div><div class="t nm" style="left:590.8px;top:376.88px;width:63.90px;color:#333">2,788</div><div class="t nm" style="left:661.2px;top:376.88px;width:62.20px;color:#333">2,880</div><div class="t nm" style="left:729.9px;top:376.88px;width:65.40px;color:#2e3a98">&minus;0.092</div><div class="t dt" style="left:451px;top:396.02px;width:70.0px">24/11/27</div><div class="t nm" style="left:521.0px;top:396.02px;width:63.30px;color:#333">2,883</div><div class="t nm" style="left:590.8px;top:396.02px;width:63.90px;color:#333">2,880</div><div class="t nm" style="left:661.2px;top:396.02px;width:62.20px;color:#333">2,903</div><div class="t nm" style="left:729.9px;top:396.02px;width:65.40px;color:#2e3a98">&minus;0.023</div><div class="t dt" style="left:451px;top:415.16px;width:70.0px">24/11/26</div><div class="t nm" style="left:521.0px;top:415.16px;width:63.30px;color:#333">2,886</div><div class="t nm" style="left:590.8px;top:415.16px;width:63.90px;color:#333">2,903</div><div class="t nm" style="left:661.2px;top:415.16px;width:62.20px;color:#333">2,920</div><div class="t nm" style="left:729.9px;top:415.16px;width:65.40px;color:#2e3a98">&minus;0.017</div><div class="t dt" style="left:451px;top:434.30px;width:70.0px">24/11/25</div><div class="t nm" style="left:521.0px;top:434.30px;width:63.30px;color:#333">2,935</div><div class="t nm" style="left:590.8px;top:434.30px;width:63.90px;color:#333">2,920</div><div class="t nm" style="left:661.2px;top:434.30px;width:62.20px;color:#333">2,976</div><div class="t nm" style="left:729.9px;top:434.30px;width:65.40px;color:#2e3a98">&minus;0.056</div>
</div></body></html>
